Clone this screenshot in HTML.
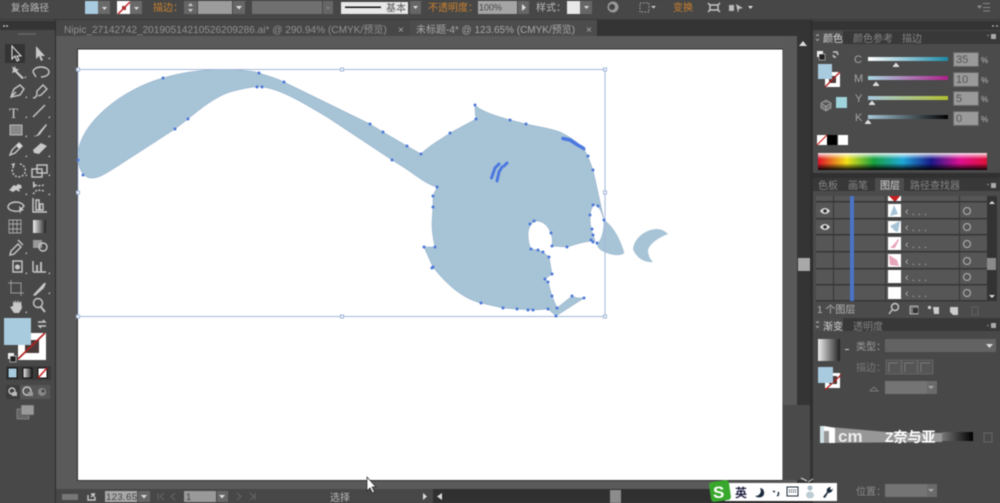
<!DOCTYPE html>
<html><head><meta charset="utf-8"><style>
html,body{margin:0;padding:0;background:#474747;width:1000px;height:503px;overflow:hidden}
svg{display:block;filter:blur(.4px)}
text{font-family:"Liberation Sans","Noto Sans CJK SC",sans-serif;font-size:10px;fill:#bcbcbc}
.o{fill:#c9802e}.d{fill:#858585}
.ic{fill:none;stroke:#c8c8c8;stroke-width:1.400}
.f{fill:#c8c8c8}
</style></head><body>
<svg width="1000" height="503" viewBox="0 0 1000 503" xmlns="http://www.w3.org/2000/svg">
<defs>
<linearGradient id="sp" x1="0" x2="1" y1="0" y2="0"><stop offset="0" stop-color="#e0102a"/><stop offset=".17" stop-color="#f2e21a"/><stop offset=".33" stop-color="#18a040"/><stop offset=".5" stop-color="#1fa8d8"/><stop offset=".67" stop-color="#1a1a8a"/><stop offset=".84" stop-color="#e01090"/><stop offset="1" stop-color="#e0103a"/></linearGradient>
<linearGradient id="spv" x1="0" x2="0" y1="0" y2="1"><stop offset="0" stop-color="#fff" stop-opacity=".9"/><stop offset=".35" stop-color="#fff" stop-opacity="0"/><stop offset=".6" stop-color="#000" stop-opacity="0"/><stop offset="1" stop-color="#000" stop-opacity=".95"/></linearGradient>
<linearGradient id="c" x1="0" x2="1"><stop offset="0" stop-color="#fff"/><stop offset="1" stop-color="#1a8aa8"/></linearGradient>
<linearGradient id="m" x1="0" x2="1"><stop offset="0" stop-color="#a8d8e0"/><stop offset="1" stop-color="#b0208a"/></linearGradient>
<linearGradient id="y" x1="0" x2="1"><stop offset="0" stop-color="#a8c8e0"/><stop offset="1" stop-color="#b0c030"/></linearGradient>
<linearGradient id="k" x1="0" x2="1"><stop offset="0" stop-color="#a8c8d8"/><stop offset="1" stop-color="#000"/></linearGradient>
<linearGradient id="g" x1="0" x2="1"><stop offset="0" stop-color="#eee"/><stop offset="1" stop-color="#222"/></linearGradient>
<linearGradient id="g2" x1="0" x2="1"><stop offset="0" stop-color="#777"/><stop offset="1" stop-color="#000"/></linearGradient>
</defs>

<!-- base areas -->
<rect width="1000" height="503" fill="#474747"/>
<rect x="56" y="36" width="727" height="453" fill="#5a5a5a"/>
<rect x="78" y="49" width="705" height="431" fill="#fff"/>
<rect x="77" y="48.500" width="706" height="1" fill="#2e2e2e"/>
<rect x="77" y="49" width="1" height="432" fill="#2e2e2e"/>
<rect x="77" y="480" width="706" height="1" fill="#333"/>
<rect x="782.500" y="49" width="1" height="432" fill="#333"/>

<!-- top bar -->
<rect width="1000" height="20" fill="#474747"/>
<rect y="19" width="1000" height="1" fill="#3a3a3a"/>
<text x="11" y="11" style="font-size:9.500px">复合路径</text>
<rect x="85" y="1" width="13" height="13" fill="#a9cbe0"/><rect x="98" y="1" width="12" height="13" fill="#6a6a6a"/><path d="M102 7h5l-2.500 3z" fill="#ddd"/>
<rect x="117" y="1" width="13" height="13" fill="#fff"/><path d="M118 14L130 2" stroke="#c22" stroke-width="1.500"/><rect x="122" y="6" width="4" height="4" fill="#a33"/><rect x="130" y="1" width="12" height="13" fill="#6a6a6a"/><path d="M134 7h5l-2.500 3z" fill="#ddd"/>
<text x="153" y="11" class="o">描边：</text>
<rect x="184" y="1" width="13" height="13" fill="#666"/><path d="M188 6l2.500-3 2.500 3zM188 9l2.500 3 2.500-3z" fill="#ccc"/>
<rect x="198" y="1" width="34" height="13" fill="#9c9c9c"/><rect x="233" y="1" width="12" height="13" fill="#666"/><path d="M236 6h6l-3 3.500z" fill="#ddd"/>
<rect x="252" y="1" width="70" height="13" fill="#6f6f6f"/><rect x="323" y="1" width="10" height="13" fill="#666"/><path d="M326 7h4l-2 2.500z" fill="#888"/>
<rect x="341" y="2" width="67" height="12" fill="#e8e8e8"/><rect x="345" y="6.500" width="36" height="1.500" fill="#111"/><text x="386" y="11.500" style="fill:#555">基本</text>
<rect x="410" y="1" width="11" height="13" fill="#666"/><path d="M413 6h5l-2.500 3z" fill="#ddd"/>
<text x="428" y="11" class="o">不透明度：</text>
<rect x="478" y="1" width="39" height="13" fill="#a5a5a5"/><text x="479" y="10.500" style="fill:#444;font-size:9px">100%</text>
<rect x="518" y="1" width="11" height="13" fill="#666"/><path d="M522 4l4 3.500-4 3.500z" fill="#ddd"/>
<text x="536" y="11">样式：</text>
<rect x="567" y="1" width="13" height="13" fill="#e8e8e8"/><rect x="580" y="1" width="12" height="13" fill="#666"/><path d="M584 6h5l-2.500 3z" fill="#ddd"/>
<circle cx="613" cy="7" r="5.500" fill="#999"/><circle cx="612" cy="7" r="3" fill="#444"/>
<rect x="640" y="3" width="9" height="9" fill="none" stroke="#aaa" stroke-dasharray="1.500 1.500"/><path d="M651 6h5l-2.500 2.500z" fill="#ccc"/>
<text x="673" y="11" class="o">变换</text>
<path d="M708 3l2 2h8l2-2M708 12l2-2h8l2 2M710 5v5M718 5v5" class="ic"/>
<path d="M729 5h5v6h-5zM736 4l7 4-4 1-1 4z" fill="#bbb"/><path d="M748 6h5l-2.500 3z" fill="#ddd"/>
<path d="M978 6h3l-1.500 2zM983 3.500h7M983 7.500h7M983 11h7" stroke="#888" fill="#aaa"/>

<!-- tabs -->
<rect y="20" x="56" width="754" height="16" fill="#343434"/>
<rect x="56" y="20" width="541" height="16" fill="#474747"/>
<rect x="410" y="20" width="187" height="16" fill="#4c4c4c"/>
<text x="64" y="33" style="font-size:10.100px;fill:#929292">Nipic_27142742_20190514210526209286.ai* @ 290.94% (CMYK/预览)</text>
<text x="398" y="33" style="font-size:10px;fill:#aaa">×</text>
<text x="416" y="33" style="font-size:10px;fill:#a8a8a8">未标题-4* @ 123.65% (CMYK/预览)</text>
<text x="586" y="33" style="font-size:10px;fill:#aaa">×</text>

<!-- left toolbar -->
<rect x="0" y="20" width="56" height="483" fill="#484848"/>
<rect x="0" y="21" width="55" height="9" fill="#343434"/>
<rect x="55" y="20" width="1" height="483" fill="#2c2c2c"/>
<path d="M3 26h2M6 26h2" stroke="#bbb" stroke-width="1.500"/>
<rect x="18" y="33" width="18" height="2" fill="#5e5e5e"/>
<rect x="5" y="44" width="20" height="19" fill="#343434"/>
<path d="M12 46v13l3-3 2 5 2-1-2-4h4z" fill="none" stroke="#ddd" stroke-width="1.100"/>
<path d="M36 46v13l3-3 2 5 2-1-2-4h4z" fill="#c8c8c8"/>
<path d="M12 66l2 2 1-2 1 3 3 0-2 2 7 7-2 1-7-7-3 1 1-3z" class="f"/>
<path d="M33 72a8 5 0 1 1 8 5M33 72l3 5" class="ic" stroke-width="2"/>
<path d="M11 97l3-8 6-4 4 4-4 6zM11 97l5-5" class="ic" stroke-width="1.800"/>
<path d="M33 98c4 0 4-4 4-7l6-6 4 4-6 6-3 1" class="ic" stroke-width="1.500"/>
<text x="9" y="118" style="font-size:15px;font-family:'Liberation Serif',serif;fill:#c8c8c8">T</text>
<path d="M33 117l12-12" class="ic"/>
<rect x="10" y="125" width="12" height="10" fill="#888" stroke="#bbb"/>
<path d="M33 136c4 0 5-2 6-4l7-8 1 1-6 8c-1 2-4 4-8 3z" class="f"/>
<path d="M10 155l2-5 7-7 3 3-7 7z" class="ic" stroke-width="1.500"/><circle cx="19" cy="146" r="2" fill="#ddd"/>
<path d="M33 150l8-7 6 3-8 8-5-1z" class="f"/>
<path d="M20 164a6.500 6.500 0 1 1-6 2" class="ic" stroke-dasharray="2 1.500"/><path d="M11 164l3 3 1-4z" class="f"/>
<rect x="32" y="169" width="10" height="8" class="ic"/><rect x="37" y="165" width="10" height="8" class="ic"/>
<path d="M9 190c2-1 3-4 5-5l2 1 2-2 3 1 1 3-3 1 1 3-4-2-3 2z" class="f"/>
<path d="M33 182l4 4 8-1M33 194l4-4 8 1" class="ic" stroke-dasharray="2 1.500"/><path d="M33 182v6l3-2z" class="f"/>
<path d="M8 207c0-3 4-5 8-5s7 2 8 4l-5 5c-5 1-11-1-11-4z" class="ic"/><path d="M19 206l5 4-3 1-1 3z" class="f"/>
<path d="M33 198v14h14M36 200h3v10h-3zM40 204h3v6h-3z" class="ic"/>
<path d="M9 220h12v13H9zM13 220v13M17 220v13M9 224h12M9 229h12" fill="none" stroke="#aaa" stroke-width=".9"/>
<rect x="33" y="220" width="13" height="13" fill="url(#g)"/>
<path d="M11 251l7-7 3 3-7 7-4 1zM18 240l5 5" class="ic" stroke-width="1.700"/>
<rect x="33" y="240" width="9" height="8" fill="#999"/><circle cx="43" cy="247" r="4" class="ic"/>
<rect x="13" y="261" width="9" height="11" class="ic"/><circle cx="17.500" cy="267" r="2.500" class="f"/>
<path d="M33 272v-11M33 272h13" class="ic"/><rect x="36" y="265" width="2" height="7" fill="#bbb"/><rect x="40" y="262" width="2" height="10" fill="#bbb"/>
<path d="M11 283h10v10H11zM8 283h3M21 293h3M11 280v3M21 293v3" fill="none" stroke="#999"/>
<path d="M33 295l11-12 2 0-2 5-9 8z" class="f"/>
<path d="M10 307l3-1v-5l2 2v-3l2 3 1-3 1 3 2-2 1 7-3 5h-5z" class="f"/>
<circle cx="38" cy="303" r="4.500" class="ic" stroke-width="2"/><path d="M41 307l4 5" stroke="#c4c4c4" stroke-width="2"/>
<!-- tool corner ticks -->
<path d="M48 59h2v-2zM24 78h2v-2zM25 98h2v-2zM48 98h2v-2zM25 118h2v-2zM48 118h2v-2zM25 137h2v-2zM48 137h2v-2zM25 157h2v-2zM48 157h2v-2zM25 176h2v-2zM48 176h2v-2zM25 195h2v-2zM48 195h2v-2zM25 254h2v-2zM25 274h2v-2zM48 274h2v-2zM48 294h2v-2zM25 313h2v-2z" fill="#ccc"/>

<!-- fill/stroke -->
<rect x="18" y="333" width="28" height="27" fill="#fff"/>
<rect x="25" y="340" width="14" height="13" fill="#4a3a3a"/>
<path d="M18 359L45 333" stroke="#b02020" stroke-width="1.600"/>
<rect x="4" y="318" width="27" height="27" fill="#a9cbde"/>
<path d="M38 322h7l-2-2M46 326h-7l2 2" class="ic"/>
<rect x="8" y="353" width="6" height="6" fill="#eee"/><rect x="10" y="356" width="6" height="6" fill="#222" stroke="#eee" stroke-width=".6"/>
<rect x="6" y="366" width="45" height="14" fill="#3a3a3a"/>
<rect x="8" y="368" width="9" height="10" fill="#a9cbde" stroke="#111"/>
<rect x="23" y="368" width="9" height="10" fill="url(#g)" stroke="#111"/>
<rect x="38" y="368" width="9" height="10" fill="#fff" stroke="#111"/><path d="M38 378l9-10" stroke="#c22" stroke-width="1.500"/>
<rect x="6" y="385" width="14" height="14" fill="#3c3c3c"/><rect x="20" y="385" width="30" height="14" fill="#565656"/>
<circle cx="12" cy="391" r="3" class="ic"/><rect x="12" y="392" width="5" height="4" fill="#bbb"/>
<circle cx="27" cy="391" r="4" class="ic" stroke="#aaa"/><rect x="28" y="392" width="5" height="4" fill="#999"/>
<circle cx="42" cy="392" r="4" fill="#888"/><circle cx="43" cy="391" r="1.500" fill="#444"/>
<rect x="17" y="409" width="12" height="10" fill="#666" stroke="#999" stroke-width=".6"/><rect x="21" y="405" width="13" height="10" fill="#999" stroke="#555" stroke-width=".6"/>

<!-- artwork -->
<g fill="#a7c4d6" stroke="#86a5c6" stroke-width=".5">
<path d="M78 156C78 125 120 90 163 78C190 70 215 69 238 70C248 71 254 71 259 73C268 76 276 78 284 82L370 124L383 132L407 146L421 154C430 145 440 140 450 133L476 119C475 112 475 109 475 105C482 112 497 116 510 120L526 124C540 127 552 129 560 132C570 137 578 142 584 149C588 156 590 162 593 170L604 220C612 226 619 236 624 253C620 256 612 255 605 252C600 250 598 248 597 244C601 241 604 232 604 222C602 210 598 205 594 205C590 209 589 218 591 228C593 236 595 240 595 241C585 241 577 244 567 247L552 246C553 241 552 237 551 233C548 226 544 222 538 221C532 221 529 226 528 233C528 240 529 245 531 249L538 250L543 252L549 257L552 274L545 279L548 282L552 296L557 308L572 296L577 298L584 298L556 316L548 309L533 310L517 309L503 308L481 303C460 298 443 280 433 267L424 247L435 247C433 238 432 230 432 223L433 207L433 196L437 187C425 184 412 172 400 165L392 160L327 117C300 101 280 89 262 87C256 86 245 88 230 92C215 97 200 109 188 119L175 129L127 160C110 171 100 178 93 178C84 179 78 170 78 156Z"/>
</g>
<path d="M624 253C620 256 612 255 605 252C600 250 598 248 597 244C601 241 604 232 604 222C612 226 619 236 624 253Z" fill="#a7c4d6"/>
<path d="M668 234C660 237 650 243 648 250C648 255 650 259 653 262C645 263 636 258 633 249C634 238 646 229 657 229C662 229 666 232 668 234Z" fill="#a7c4d6"/>

<!-- bounding box -->
<rect x="78" y="69.500" width="527" height="247" fill="none" stroke="#a3b8d8" stroke-width="1"/>
<g fill="#fff" stroke="#9fb5d8"><rect x="76.500" y="68" width="3" height="3"/><rect x="340.500" y="68" width="3" height="3"/><rect x="603.500" y="68" width="3" height="3"/><rect x="76.500" y="191" width="3" height="3"/><rect x="603.500" y="191" width="3" height="3"/><rect x="76.500" y="315" width="3" height="3"/><rect x="340.500" y="315" width="3" height="3"/><rect x="603.500" y="315" width="3" height="3"/></g>

<!-- anchors -->
<g fill="none" stroke="#4d78e0" stroke-linecap="round">
<path d="M491.500 178L495 168L499 164" stroke-width="3"/>
<path d="M497 181L499 172L502 167" stroke-width="3"/>
<path d="M504 166L507 163" stroke-width="3"/>
<path d="M563 138.500L570 140L576 144L583 148" stroke-width="3.500"/>
</g>
<g fill="#4d78d8">
<circle cx="78" cy="160" r="1.500"/><circle cx="83" cy="175" r="1.500"/><circle cx="163" cy="78" r="1.500"/><circle cx="259" cy="73" r="1.500"/><circle cx="284" cy="82" r="1.500"/><circle cx="370" cy="124" r="1.500"/><circle cx="383" cy="132" r="1.500"/><circle cx="407" cy="146" r="1.500"/><circle cx="421" cy="154" r="1.500"/><circle cx="392" cy="160" r="1.500"/><circle cx="262" cy="87" r="1.500"/><circle cx="257" cy="87" r="1.500"/><circle cx="188" cy="119" r="1.500"/><circle cx="175" cy="129" r="1.500"/><circle cx="450" cy="133" r="1.500"/><circle cx="476" cy="119" r="1.500"/><circle cx="475" cy="105" r="1.500"/><circle cx="510" cy="120" r="1.500"/><circle cx="526" cy="124" r="1.500"/><circle cx="584" cy="149" r="1.500"/><circle cx="588" cy="156" r="1.500"/><circle cx="593" cy="170" r="1.500"/><circle cx="604" cy="220" r="1.500"/><circle cx="593" cy="205" r="1.500"/><circle cx="598" cy="206" r="1.500"/><circle cx="590" cy="215" r="1.500"/><circle cx="592" cy="229" r="1.500"/><circle cx="593" cy="235" r="1.500"/><circle cx="593" cy="242" r="1.500"/><circle cx="597" cy="243" r="1.500"/><circle cx="591" cy="240" r="1.500"/><circle cx="567" cy="247" r="1.500"/><circle cx="552" cy="246" r="1.500"/><circle cx="551" cy="233" r="1.500"/><circle cx="534" cy="221" r="1.500"/><circle cx="530" cy="224" r="1.500"/><circle cx="531" cy="249" r="1.500"/><circle cx="538" cy="250" r="1.500"/><circle cx="543" cy="252" r="1.500"/><circle cx="549" cy="257" r="1.500"/><circle cx="552" cy="274" r="1.500"/><circle cx="545" cy="279" r="1.500"/><circle cx="548" cy="282" r="1.500"/><circle cx="552" cy="296" r="1.500"/><circle cx="557" cy="308" r="1.500"/><circle cx="572" cy="296" r="1.500"/><circle cx="584" cy="298" r="1.500"/><circle cx="556" cy="316" r="1.500"/><circle cx="548" cy="309" r="1.500"/><circle cx="533" cy="310" r="1.500"/><circle cx="528" cy="310" r="1.500"/><circle cx="517" cy="309" r="1.500"/><circle cx="503" cy="308" r="1.500"/><circle cx="481" cy="303" r="1.500"/><circle cx="433" cy="267" r="1.500"/><circle cx="432" cy="268" r="1.500"/><circle cx="424" cy="247" r="1.500"/><circle cx="435" cy="247" r="1.500"/><circle cx="433" cy="207" r="1.500"/><circle cx="433" cy="196" r="1.500"/><circle cx="437" cy="187" r="1.500"/>
</g>

<!-- right scrollbar column -->
<rect x="783" y="36" width="14" height="453" fill="#595959"/>
<rect x="797" y="36" width="13" height="453" fill="#343434"/>
<path d="M799 46l4-5 4 5z" fill="#ddd"/>
<rect x="798" y="258" width="12" height="13" fill="#a8a8a8"/>
<path d="M783 405h27v75h-27z" fill="#4a4a4a"/>

<!-- status bar -->
<rect x="56" y="489" width="377" height="14" fill="#474747"/>
<rect x="433" y="489" width="377" height="14" fill="#303030"/>
<rect x="62" y="494" width="16" height="6" fill="#777"/>
<path d="M88 495v5h7v-3M91 497l3-3h-3m3 0v3" class="ic"/>
<rect x="105" y="491" width="32" height="11" fill="#a8a8a8"/><text x="106" y="500" style="fill:#444;font-size:9.500px;letter-spacing:.4px">123.65</text>
<rect x="138" y="491" width="12" height="11" fill="#666"/><path d="M141 495h6l-3 3.500z" fill="#ddd"/>
<path d="M158 493v7M164 493l-4 3.500 4 3.500M175 493l-4 3.500 4 3.500M237 493l4 3.500-4 3.500M250 493l4 3.500-4 3.500M255 493v7" stroke="#666" fill="none"/>
<rect x="184" y="491" width="32" height="11" fill="#999"/><text x="186" y="500" style="fill:#444;font-size:9.500px">1</text>
<rect x="217" y="491" width="11" height="11" fill="#666"/><path d="M219 495h6l-3 3.500z" fill="#ddd"/>
<text x="330" y="501" style="fill:#b8b8b8;font-size:10px">选择</text>
<path d="M423 493l4 3.500-4 3.500z" fill="#ddd"/>
<path d="M442 493l-5 3.500 5 3.500z" fill="#ddd"/>
<rect x="610" y="490" width="11" height="13" fill="#8c8c8c"/>
<path d="M367 477v14l3-3 2.500 5 2-1-2.500-5h4z" fill="#fff" stroke="#222" stroke-width=".7"/>

<!-- right panels -->
<rect x="810" y="20" width="190" height="483" fill="#474747"/>
<rect x="810" y="20" width="3" height="483" fill="#2f2f2f"/>
<rect x="813" y="21" width="187" height="9" fill="#343434"/>
<path d="M992 26h2M996 26h2" stroke="#bbb" stroke-width="1.200"/>
<!-- color -->
<rect x="813" y="31" width="187" height="13" fill="#383838"/>
<rect x="813" y="31" width="30" height="13" fill="#4c4c4c"/>
<text x="823" y="42" style="fill:#d5d5d5">颜色</text><text x="853" y="42" class="d">颜色参考</text><text x="902" y="42" class="d">描边</text>
<path d="M816 36l1.500-1.500 1.500 1.500M816 39l1.500 1.500 1.500-1.500" stroke="#ccc" fill="none" stroke-width=".7"/>
<path d="M987 35h2l-1 1.500zM991 34h5v5h-5z" fill="#aaa"/>
<rect x="813" y="44" width="187" height="128" fill="#4b4b4b"/>
<rect x="817" y="51" width="6" height="6" fill="#eee"/><rect x="819" y="54" width="6" height="6" fill="#222" stroke="#eee" stroke-width=".5"/>
<path d="M833 52h4l1 3M836 57h-2l-1-2" class="ic" stroke-width="1"/>
<rect x="825" y="72" width="15" height="15" fill="#fff"/><rect x="829" y="76" width="7" height="7" fill="#4a3a3a"/><path d="M825 87L840 72" stroke="#b02020" stroke-width="1.300"/>
<rect x="818" y="64" width="14" height="15" fill="#a9cbe0"/>
<path d="M821 103l5-3 5 3v5l-5 3-5-3zM821 103l5 3 5-3M826 106v5" fill="#777" stroke="#aaa" stroke-width=".7"/>
<rect x="836" y="97" width="11" height="11" fill="#a0d4dc"/>
<text x="854" y="63" style="fill:#a5a5a5;font-size:11px">C</text><text x="854" y="82" style="fill:#a5a5a5;font-size:11px">M</text><text x="855" y="102" style="fill:#a5a5a5;font-size:11px">Y</text><text x="855" y="121" style="fill:#a5a5a5;font-size:11px">K</text>
<rect x="868" y="57" width="80" height="4" fill="url(#c)"/><rect x="868" y="76" width="80" height="4" fill="url(#m)"/><rect x="868" y="96" width="80" height="4" fill="url(#y)"/><rect x="868" y="115" width="80" height="4" fill="url(#k)"/>
<path d="M893 66l3-3.500 3 3.500v1h-6zM873 85l3-3.500 3 3.500v1h-6zM869 104l3-3.500 3 3.500v1h-6zM865 123l3-3.500 3 3.500v1h-6z" fill="#ddd"/>
<g fill="#9a9a9a" stroke="#666"><rect x="953.500" y="52.500" width="25" height="14"/><rect x="953.500" y="72.500" width="25" height="14"/><rect x="953.500" y="91.500" width="25" height="14"/><rect x="953.500" y="111.500" width="25" height="14"/></g>
<text x="956" y="63" style="fill:#555;font-size:11px">35</text><text x="956" y="83" style="fill:#555;font-size:11px">10</text><text x="956" y="102" style="fill:#555;font-size:11px">5</text><text x="956" y="122" style="fill:#555;font-size:11px">0</text>
<text x="981" y="63" style="font-size:8px">%</text><text x="981" y="83" style="font-size:8px">%</text><text x="981" y="102" style="font-size:8px">%</text><text x="981" y="122" style="font-size:8px">%</text>
<rect x="817" y="135" width="10" height="10" fill="#fff"/><path d="M817 145l10-10" stroke="#c22" stroke-width="1.200"/><rect x="827" y="135" width="10" height="10" fill="#000"/><rect x="838" y="135" width="10" height="10" fill="#fff"/>
<rect x="818" y="153" width="169" height="17" fill="url(#sp)"/><rect x="818" y="153" width="169" height="17" fill="url(#spv)"/>

<!-- layers -->
<rect x="813" y="173" width="187" height="5" fill="#303030"/>
<rect x="813" y="178" width="187" height="13" fill="#383838"/>
<rect x="875" y="178" width="29" height="13" fill="#4c4c4c"/>
<text x="818" y="189" class="d">色板</text><text x="848" y="189" class="d">画笔</text><text x="880" y="189" style="fill:#d5d5d5">图层</text><text x="910" y="189" class="d">路径查找器</text>
<path d="M987 184h2l-1 1.500zM991 183h5v5h-5z" fill="#aaa"/>
<rect x="813" y="191" width="187" height="127" fill="#4b4b4b"/>
<rect x="816" y="196" width="171" height="105" fill="#565656"/>
<g fill="#363636"><rect x="816" y="201" width="171" height="1.500"/><rect x="816" y="218" width="171" height="1.500"/><rect x="816" y="234" width="171" height="1.500"/><rect x="816" y="251" width="171" height="1.500"/><rect x="816" y="268" width="171" height="1.500"/><rect x="816" y="284" width="171" height="1.500"/><rect x="816" y="300" width="171" height="1.500"/>
<rect x="833" y="196" width="1" height="105"/><rect x="959" y="196" width="1" height="105"/><rect x="885" y="196" width="1" height="105"/></g>
<rect x="850" y="196" width="4" height="105" fill="#4a74c8"/>
<g fill="#fff"><rect x="888" y="196" width="13" height="5"/><rect x="888" y="204" width="13" height="13"/><rect x="888" y="221" width="13" height="12"/><rect x="888" y="237" width="13" height="13"/><rect x="888" y="254" width="13" height="13"/><rect x="888" y="270" width="13" height="13"/><rect x="888" y="287" width="13" height="12"/></g>
<path d="M889 196h11l-4 5h-2z" fill="#c62020"/>
<path d="M894 205l4 9-8 2z" fill="#a7c4d6"/><path d="M890 226l10-5-2 11-3-1z" fill="#a7c4d6"/><path d="M890 248l5-5 3-4 1 1-4 8z" fill="#e8a6bb"/><path d="M889 255l8 5 2 6-9-1z" fill="#e8a6bb"/>
<text x="905" y="215" style="fill:#b0b0b0;font-size:11px">‹ . . .</text><text x="905" y="231" style="fill:#b0b0b0;font-size:11px">‹ . . .</text><text x="905" y="248" style="fill:#b0b0b0;font-size:11px">‹ . . .</text><text x="905" y="265" style="fill:#b0b0b0;font-size:11px">‹ . . .</text><text x="905" y="281" style="fill:#b0b0b0;font-size:11px">‹ . . .</text><text x="905" y="297" style="fill:#b0b0b0;font-size:11px">‹ . . .</text>
<g fill="none" stroke="#b5b5b5" stroke-width="1"><circle cx="967" cy="211" r="3.500"/><circle cx="967" cy="227" r="3.500"/><circle cx="967" cy="244" r="3.500"/><circle cx="967" cy="261" r="3.500"/><circle cx="967" cy="277" r="3.500"/><circle cx="967" cy="293" r="3.500"/></g>
<path d="M820 211c3-4 7-4 10 0-3 4-7 4-10 0z" fill="#ddd"/><circle cx="825" cy="211" r="1.800" fill="#333"/><path d="M820 227c3-4 7-4 10 0-3 4-7 4-10 0z" fill="#ddd"/><circle cx="825" cy="227" r="1.800" fill="#333"/>
<rect x="987" y="196" width="10" height="105" fill="#333"/>
<path d="M989 204l3-3 3 3z" fill="#ddd"/><path d="M989 295l3 3 3-3z" fill="#ddd"/>
<rect x="987" y="258" width="9" height="12" fill="#8a8a8a"/>
<text x="817" y="313" style="fill:#b5b5b5">1 个图层</text>
<circle cx="895" cy="307" r="3.500" class="ic"/><path d="M892 310l-3 4" class="ic"/>
<rect x="910" y="306" width="8" height="8" fill="#777" stroke="#ccc" stroke-width=".7"/><rect x="913" y="308" width="5" height="5" fill="#333"/>
<path d="M928 306h3v3h-3zM933 307h6v7h-5z" fill="#ccc"/><path d="M950 307h8v8h-5l-3-3z" fill="#ccc"/>
<path d="M971 307h8M972 308v7h6v-7" stroke="#5f5f5f" fill="none"/>

<!-- gradient panel -->
<rect x="813" y="318" width="187" height="13" fill="#383838"/>
<rect x="813" y="318" width="30" height="13" fill="#4c4c4c"/>
<text x="823" y="330" style="fill:#d5d5d5">渐变</text><text x="853" y="330" class="d">透明度</text>
<path d="M816 323l1.500-1.500 1.500 1.500M816 326l1.500 1.500 1.500-1.500" stroke="#ccc" fill="none" stroke-width=".7"/>
<path d="M987 325h2l-1 1.500zM991 323h5v5h-5z" fill="#aaa"/>
<rect x="813" y="331" width="187" height="172" fill="#484848"/>
<rect x="818" y="339" width="22" height="22" fill="url(#g)"/>
<path d="M845 349h4v1h-4z" fill="#ccc"/>
<text x="856" y="350" style="fill:#9a9a9a">类型：</text>
<rect x="885" y="339" width="111" height="13" fill="#636363"/><path d="M986 344h7l-3.500 4z" fill="#ddd"/>
<text x="856" y="371" style="fill:#777">描边：</text>
<g fill="#555" stroke="#636363"><rect x="886" y="360" width="15" height="14"/><rect x="902" y="360" width="15" height="14"/><rect x="918" y="360" width="15" height="14"/></g>
<path d="M889 372v-9h9M905 372v-9h9M921 372v-9h9" stroke="#7a7a7a" fill="none"/>
<path d="M870 391l4-4 4 4z" fill="none" stroke="#777"/>
<rect x="885" y="381" width="31" height="13" fill="#747474"/><rect x="927" y="381" width="10" height="13" fill="#6a6a6a"/><rect x="916" y="381" width="11" height="13" fill="#747474"/><path d="M928 386h6l-3 3z" fill="#aaa"/>
<rect x="825" y="373" width="15" height="15" fill="#fff"/><rect x="829" y="376" width="8" height="8" fill="#4a3a3a"/><path d="M825 390L841 375" stroke="#b02020" stroke-width="1.300"/>
<rect x="818" y="367" width="15" height="16" fill="#a9cbe0"/>

<!-- watermark band -->
<path d="M820 426l10 1 57 5 55 1v9l-122 1z" fill="#979797"/>
<path d="M820 426l4 0v17h-4z" fill="#cfdfe6"/><path d="M824 426l6 1 5 1v15h-6v-12h-5z" fill="#fff"/>
<text x="838" y="442" style="font-size:17px;font-weight:bold;fill:#eee;font-family:'Liberation Sans',sans-serif">cm</text>
<text x="885" y="442" style="font-size:14px;font-weight:bold;fill:#fff">Z奈与亚</text>
<rect x="942" y="432" width="31" height="9" fill="url(#g2)"/>
<rect x="984" y="433" width="8" height="9" fill="none" stroke="#666"/>
<text x="856" y="495" style="fill:#8a8a8a">位置：</text>
<rect x="885" y="484" width="31" height="13" fill="#747474"/><rect x="916" y="484" width="11" height="13" fill="#747474"/><rect x="927" y="484" width="10" height="13" fill="#6a6a6a"/><path d="M928 489h6l-3 3z" fill="#aaa"/>
<rect x="810" y="440" width="3" height="40" fill="#343434"/>
<path d="M801 478l6 3M808 482l5-3" stroke="#ddd" stroke-width="1"/>

<!-- IME bar -->
<rect x="725" y="483" width="112" height="18" fill="#fff"/>
<rect x="710" y="481" width="20" height="20" rx="3" fill="#38a82c" transform="rotate(-8 720 491)"/>
<text x="713" y="498" style="font-size:17px;font-weight:bold;fill:#fff;font-family:'Liberation Sans',sans-serif">S</text>
<text x="735" y="497" style="font-size:12px;fill:#224;font-weight:bold">英</text>
<path d="M760 488c2 4 0 8-5 8 4 3 10 1 9-4 0-2-2-4-4-4z" fill="#1a2a3a"/>
<path d="M773 491l2 1M778 492c1 1 1 3-1 4" stroke="#1a2a3a" stroke-width="1.500" fill="none"/>
<rect x="787" y="487" width="11" height="9" fill="none" stroke="#1a2a3a"/><path d="M789 490h7M789 492h7" stroke="#1a2a3a" stroke-dasharray="1 1"/>
<circle cx="810" cy="488" r="2.500" fill="#a9bcc8"/><ellipse cx="810" cy="495" rx="4" ry="3.500" fill="#bdccd4"/>
<path d="M823 497l4-5c-1-3 1-5 4-5l-1 2 2 1 1-2c0 3-2 5-5 5l-3 5z" fill="#1a2a3a"/>
</svg>
</body></html>
